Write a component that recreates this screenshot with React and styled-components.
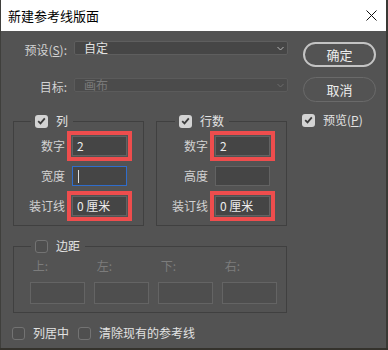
import React from "react";
import styled, { createGlobalStyle, css } from "styled-components";

const Global = createGlobalStyle`
  html, body { margin: 0; padding: 0; background: #34322c; }
  body { font-family: "Noto Sans CJK SC", "Noto Sans", sans-serif; }
  * { box-sizing: border-box; }
`;

const Dialog = styled.div`
  width: 388px;
  height: 348px;
  background: #535353;
  border-left: 1px solid #3f3f3c;
  border-right: 2px solid #3a3935;
  display: flex;
  flex-direction: column;
`;

const TitleBar = styled.div`
  height: 31px;
  background: #ffffff;
  display: flex;
  align-items: center;
  justify-content: space-between;
  padding: 0 9px 0 7px;
`;

const Title = styled.div`
  font-size: 13px;
  line-height: 16px;
  color: #000;
  margin-top: 1px;
`;

const Close = styled.svg`
  width: 11px;
  height: 11px;
  display: block;
`;

const Body = styled.div`
  display: grid;
  grid-template-columns: 302px 73px;
  padding-top: 10px;
  flex: 1;
`;

const Main = styled.div`
  padding-left: 12px;
  display: flex;
  flex-direction: column;
`;

const TopGrid = styled.div`
  display: grid;
  grid-template-columns: 54px 214px;
  column-gap: 7px;
  row-gap: 21px;
`;

const Label = styled.div`
  font-size: 12px;
  line-height: 14px;
  color: ${(p) => (p.$disabled ? "#7c7c7c" : "#d2d2d2")};
  text-align: ${(p) => (p.$left ? "left" : "right")};
  white-space: nowrap;
  padding-top: ${(p) => p.$dy || 0}px;
`;

const Select = styled.div`
  height: 14px;
  border: 1px solid ${(p) => (p.$disabled ? "#5b5b5b" : "#5e5e5e")};
  border-radius: 2px;
  background: ${(p) => (p.$disabled ? "#4b4b4b" : "#464646")};
  display: flex;
  align-items: center;
  justify-content: space-between;
  padding: 0 3px 0 9px;
  font-size: 12px;
  line-height: 14px;
  color: ${(p) => (p.$disabled ? "#7a7a7a" : "#e2e2e2")};
`;

const Chevron = styled.svg`
  width: 7px;
  height: 5px;
  display: block;
`;

const Groups = styled.div`
  display: flex;
  gap: 12px;
  margin-top: 20px;
`;

const Group = styled.fieldset`
  margin: 0;
  padding: 0 0 9px 0;
  width: ${(p) => p.$w}px;
  border: 1px solid #404040;
  min-width: 0;
`;

const Legend = styled.legend`
  margin-left: ${(p) => p.$ml || 17}px;
  padding: 0 5px 0 4px;
  height: 14px;
  display: flex;
  align-items: center;
  gap: 8px;
  font-size: 12px;
  line-height: 14px;
  color: #e4e4e4;
`;

const Rows = styled.div`
  display: grid;
  grid-template-columns: 51px 55px;
  column-gap: 7px;
  row-gap: 10px;
  padding-top: 8px;
  align-items: center;
`;

const Input = styled.div`
  height: ${(p) => p.$h || 20}px;
  border: 1px solid ${(p) => (p.$focus ? "#2f6dcc" : p.$disabled ? "#646464" : "#626262")};
  background: ${(p) => (p.$disabled ? "#4e4e4e" : "#454545")};
  font-size: 12px;
  line-height: 18px;
  color: #ececec;
  padding-left: 4px;
  display: flex;
  align-items: center;
  white-space: pre;
  ${(p) =>
    p.$mark &&
    css`
      outline: 4px solid #ee4d4d;
      outline-offset: 1px;
    `}
`;

const Caret = styled.span`
  width: 1px;
  height: 13px;
  background: #dcdcdc;
  margin-left: 1px;
`;

const MarginGroup = styled(Group)`
  margin-top: 13px;
  padding-bottom: 8px;
`;

const MarginCols = styled.div`
  display: grid;
  grid-template-columns: repeat(4, 55px);
  column-gap: 9px;
  padding: 6px 0 0 16px;
`;

const MarginCol = styled.div`
  display: flex;
  flex-direction: column;
  gap: 9px;
`;

const BottomRow = styled.div`
  display: flex;
  align-items: center;
  margin: 13px 0 0 -1px;
`;

const CheckItem = styled.label`
  display: flex;
  align-items: center;
  gap: 8px;
  margin-right: 9px;
  font-size: 12px;
  line-height: 14px;
  color: #e2e2e2;
  white-space: nowrap;
`;

const Box = styled.span`
  width: 13px;
  height: 13px;
  border-radius: 3px;
  display: flex;
  align-items: center;
  justify-content: center;
  flex: none;
  ${(p) =>
    p.$checked
      ? css`
          background: #d3d3d3;
        `
      : css`
          background: #4f4f4f;
          border: 1px solid #737373;
        `}
`;

const Side = styled.div`
  display: flex;
  flex-direction: column;
  padding-top: 1px;
`;

const Button = styled.div`
  height: 25px;
  border-radius: 13px;
  border: ${(p) => (p.$primary ? "2px solid #c4c4c4" : "1.5px solid #6a6a6a")};
  display: flex;
  align-items: center;
  justify-content: center;
  font-size: 13px;
  line-height: 16px;
  color: #ececec;
  margin-bottom: 10px;
`;

const PreviewItem = styled(CheckItem)`
  margin-top: 1px;
  margin-left: -1px;
`;

function Check({ checked }) {
  return (
    <Box $checked={checked}>
      {checked && (
        <svg width="9" height="8" viewBox="0 0 9 8">
          <path d="M1.2 4.2 L3.5 6.4 L7.8 1.4" fill="none" stroke="#3c3c3c" strokeWidth="1.8" />
        </svg>
      )}
    </Box>
  );
}

function Down({ disabled }) {
  return (
    <Chevron viewBox="0 0 7 5">
      <path d="M0.5 1 L3.5 4 L6.5 1" fill="none" stroke={disabled ? "#6c6c6c" : "#b5b5b5"} strokeWidth="1" />
    </Chevron>
  );
}

export default function App() {
  return (
    <>
      <Global />
      <Dialog>
        <TitleBar>
          <Title>新建参考线版面</Title>
          <Close viewBox="0 0 11 11">
            <path d="M0.5 0.5 L10.5 10.5 M10.5 0.5 L0.5 10.5" stroke="#111" strokeWidth="1" />
          </Close>
        </TitleBar>
        <Body>
          <Main>
            <TopGrid>
              <Label $dy={2}>预设(<u>S</u>):</Label>
              <Select>
                <span>自定</span>
                <Down />
              </Select>
              <Label $dy={2}>目标:</Label>
              <Select $disabled>
                <span>画布</span>
                <Down disabled />
              </Select>
            </TopGrid>
            <Groups>
              <Group $w={131}>
                <Legend>
                  <Check checked />
                  <span>列</span>
                </Legend>
                <Rows>
                  <Label>数字</Label>
                  <Input $mark>2</Input>
                  <Label>宽度</Label>
                  <Input $focus>
                    <Caret />
                  </Input>
                  <Label>装订线</Label>
                  <Input $mark>0 厘米</Input>
                </Rows>
              </Group>
              <Group $w={131}>
                <Legend $ml={18}>
                  <Check checked />
                  <span>行数</span>
                </Legend>
                <Rows>
                  <Label>数字</Label>
                  <Input $mark>2</Input>
                  <Label>高度</Label>
                  <Input />
                  <Label>装订线</Label>
                  <Input $mark>0 厘米</Input>
                </Rows>
              </Group>
            </Groups>
            <MarginGroup $w={274}>
              <Legend>
                <Check />
                <span>边距</span>
              </Legend>
              <MarginCols>
                {["上:", "左:", "下:", "右:"].map((t) => (
                  <MarginCol key={t}>
                    <Label $disabled $left>
                      &nbsp;{t}
                    </Label>
                    <Input $disabled $h={22} />
                  </MarginCol>
                ))}
              </MarginCols>
            </MarginGroup>
            <BottomRow>
              <CheckItem>
                <Check />
                <span>列居中</span>
              </CheckItem>
              <CheckItem>
                <Check />
                <span>清除现有的参考线</span>
              </CheckItem>
            </BottomRow>
          </Main>
          <Side>
            <Button $primary>确定</Button>
            <Button>取消</Button>
            <PreviewItem>
              <Check checked />
              <span>
                预览(<u>P</u>)
              </span>
            </PreviewItem>
          </Side>
        </Body>
      </Dialog>
    </>
  );
}
